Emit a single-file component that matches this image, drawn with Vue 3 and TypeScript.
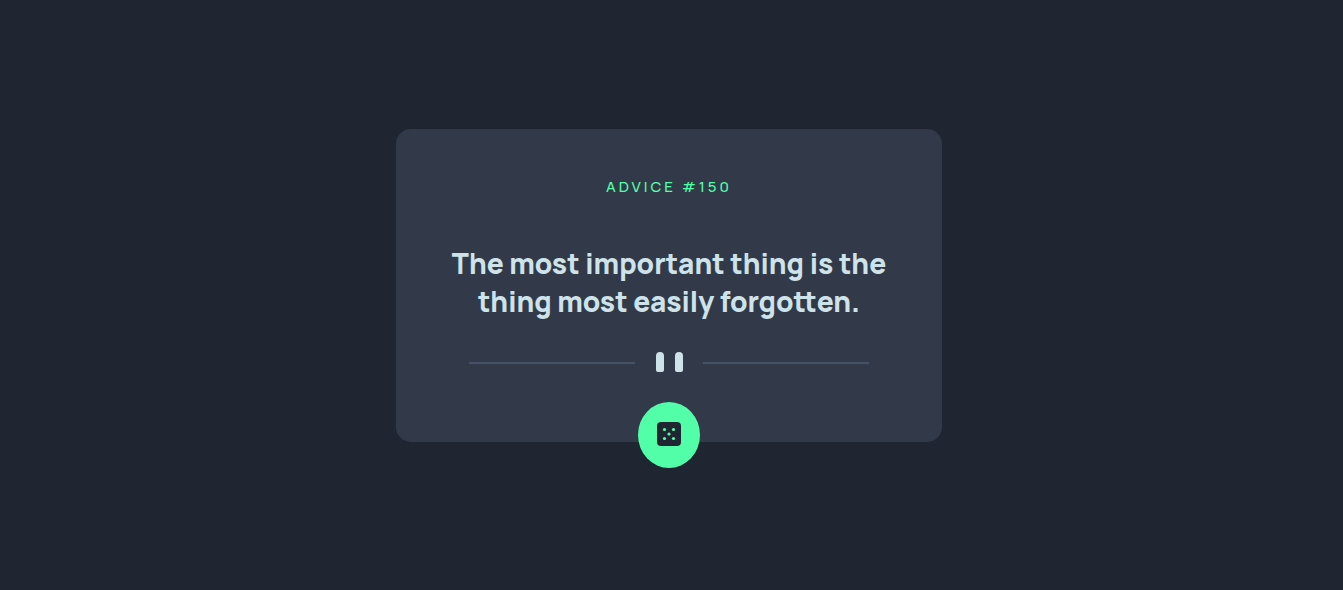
<script setup lang="ts">
import { ref } from 'vue'

interface Advice {
  id: number
  text: string
}

const advice = ref<Advice>({
  id: 150,
  text: 'The most important thing is the thing most easily forgotten.',
})
</script>

<template>
  <main class="page">
    <article class="card">
      <h1 class="label">ADVICE #{{ advice.id }}</h1>
      <p class="quote">{{ advice.text }}</p>
      <div class="divider" aria-hidden="true">
        <span class="line"></span>
        <svg class="marks" width="28" height="22" viewBox="0 0 28 22">
          <path d="M1 4a4 4 0 0 1 8 0v14a2 2 0 0 1-2 2H3a2 2 0 0 1-2-2zM20 4a4 4 0 0 1 8 0v14a2 2 0 0 1-2 2h-4a2 2 0 0 1-2-2z" fill="#cee3e9" />
        </svg>
        <span class="line"></span>
      </div>
      <button class="dice" type="button" aria-label="New advice">
        <svg width="24" height="24" viewBox="0 0 24 24">
          <rect width="24" height="24" rx="4" fill="#1f2632" />
          <g fill="#52ffa8">
            <circle cx="7.500" cy="7.500" r="1.600" />
            <circle cx="16.500" cy="7.500" r="1.600" />
            <circle cx="12" cy="12" r="1.600" />
            <circle cx="7.500" cy="16.500" r="1.600" />
            <circle cx="16.500" cy="16.500" r="1.600" />
          </g>
        </svg>
      </button>
    </article>
  </main>
</template>

<style>
body {
  margin: 0;
  background: #1f2632;
}
</style>

<style scoped>
.page {
  display: flex;
  align-items: center;
  justify-content: center;
  min-height: 100vh;
  padding: 0 21px 19px 16px;
  box-sizing: border-box;
  font-family: Manrope, Inter, "Open Sans", sans-serif;
}

.card {
  position: relative;
  display: flex;
  flex-direction: column;
  align-items: center;
  box-sizing: border-box;
  width: 100%;
  max-width: 546px;
  padding: 48px 48px 68px;
  border-radius: 15px;
  background: #323a49;
}

.label {
  margin: 0;
  color: #52ffa8;
  font-size: 15px;
  font-weight: 500;
  line-height: 20px;
  letter-spacing: 3px;
}

.quote {
  margin: 47px 0 32px;
  color: #cee3e9;
  font-size: 28px;
  font-weight: 800;
  line-height: 38px;
  text-align: center;
}

.divider {
  display: flex;
  align-items: center;
  gap: 20px;
  width: 100%;
  max-width: 400px;
}

.line {
  flex: 1;
  height: 2px;
  background: #465266;
}

.marks {
  display: block;
}

.dice {
  position: absolute;
  bottom: -26px;
  left: 50%;
  display: flex;
  align-items: center;
  justify-content: center;
  width: 62px;
  height: 66px;
  padding: 0 0 2px;
  border: 0;
  border-radius: 50%;
  background: #52ffa8;
  cursor: pointer;
  transform: translateX(-50%);
}
</style>
